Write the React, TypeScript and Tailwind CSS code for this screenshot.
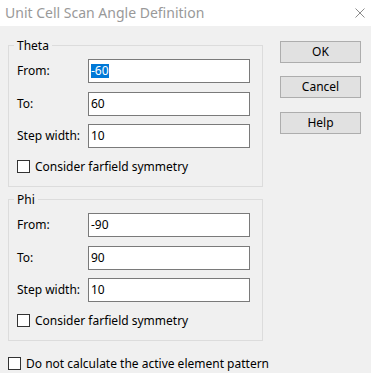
import React from 'react';

type FieldRow = { label: string; value: string; selected?: boolean };

function TextBox({ value, selected }: { value: string; selected?: boolean }) {
  return (
    <div className="w-[162px] h-[24px] border border-[#7a7a7a] bg-white flex items-center pl-[2px]">
      {selected ? (
        <span className="bg-[#0078d7] text-white leading-[14px]">{value}</span>
      ) : (
        <span className="text-black">{value}</span>
      )}
    </div>
  );
}

function CheckRow({ label }: { label: string }) {
  return (
    <div className="flex items-center h-[13px] whitespace-nowrap">
      <div className="shrink-0 w-[13px] h-[13px] border border-[#333333] bg-white" />
      <span className="ml-[5px] text-black leading-[13px]">{label}</span>
    </div>
  );
}

function AngleGroup({ title, rows }: { title: string; rows: FieldRow[] }) {
  return (
    <fieldset className="w-[255px] border border-[#dcdcdc] pl-[8px] pr-[11px] pt-[6px] pb-[13px]">
      <legend className="-ml-[3px] px-[3px] leading-[15px] text-black">{title}</legend>
      <div className="flex flex-col">
        {rows.map((row, i) => (
          <div
            key={row.label}
            className={`flex items-center h-[24px] ${i === 0 ? '' : i === 1 ? 'mt-[9px]' : 'mt-[8px]'}`}
          >
            <span className="w-[71px] text-black">{row.label}</span>
            <TextBox value={row.value} selected={row.selected} />
          </div>
        ))}
        <div className="mt-[12px]">
          <CheckRow label="Consider farfield symmetry" />
        </div>
      </div>
    </fieldset>
  );
}

function DialogButton({ label, className }: { label: string; className?: string }) {
  return (
    <button
      type="button"
      className={`w-[81px] h-[22px] bg-[#e1e1e1] border border-[#adadad] text-black leading-[20px] ${className ?? ''}`}
    >
      {label}
    </button>
  );
}

export default function App() {
  return (
    <div className="w-[371px] h-[373px] overflow-hidden bg-[#f0f0f0] text-[12px] font-['Noto_Sans',sans-serif]">
      {/* title bar */}
      <div className="h-[26px] bg-white flex items-center justify-between pl-[5px] pr-[5px]">
        <span className="text-[14px] text-[#999999] leading-[26px]">Unit Cell Scan Angle Definition</span>
        <svg width="10" height="10" viewBox="0 0 10 10" className="mr-[1px]">
          <path d="M0.5 0.5 L9.5 9.5 M9.5 0.5 L0.5 9.5" stroke="#8c8c8c" strokeWidth="1" />
        </svg>
      </div>

      {/* body */}
      <div className="flex pl-[8px] pt-[12px]">
        <div className="w-[255px] shrink-0 flex flex-col">
          <AngleGroup
            title="Theta"
            rows={[
              { label: 'From:', value: '-60', selected: true },
              { label: 'To:', value: '60' },
              { label: 'Step width:', value: '10' },
            ]}
          />
          <div className="mt-[5px]">
            <AngleGroup
              title="Phi"
              rows={[
                { label: 'From:', value: '-90' },
                { label: 'To:', value: '90' },
                { label: 'Step width:', value: '10' },
              ]}
            />
          </div>
          <div className="mt-[16px]">
            <CheckRow label="Do not calculate the active element pattern" />
          </div>
        </div>

        <div className="ml-[17px] pt-[3px] flex flex-col">
          <DialogButton label="OK" />
          <DialogButton label="Cancel" className="mt-[13px]" />
          <DialogButton label="Help" className="mt-[14px]" />
        </div>
      </div>
    </div>
  );
}
